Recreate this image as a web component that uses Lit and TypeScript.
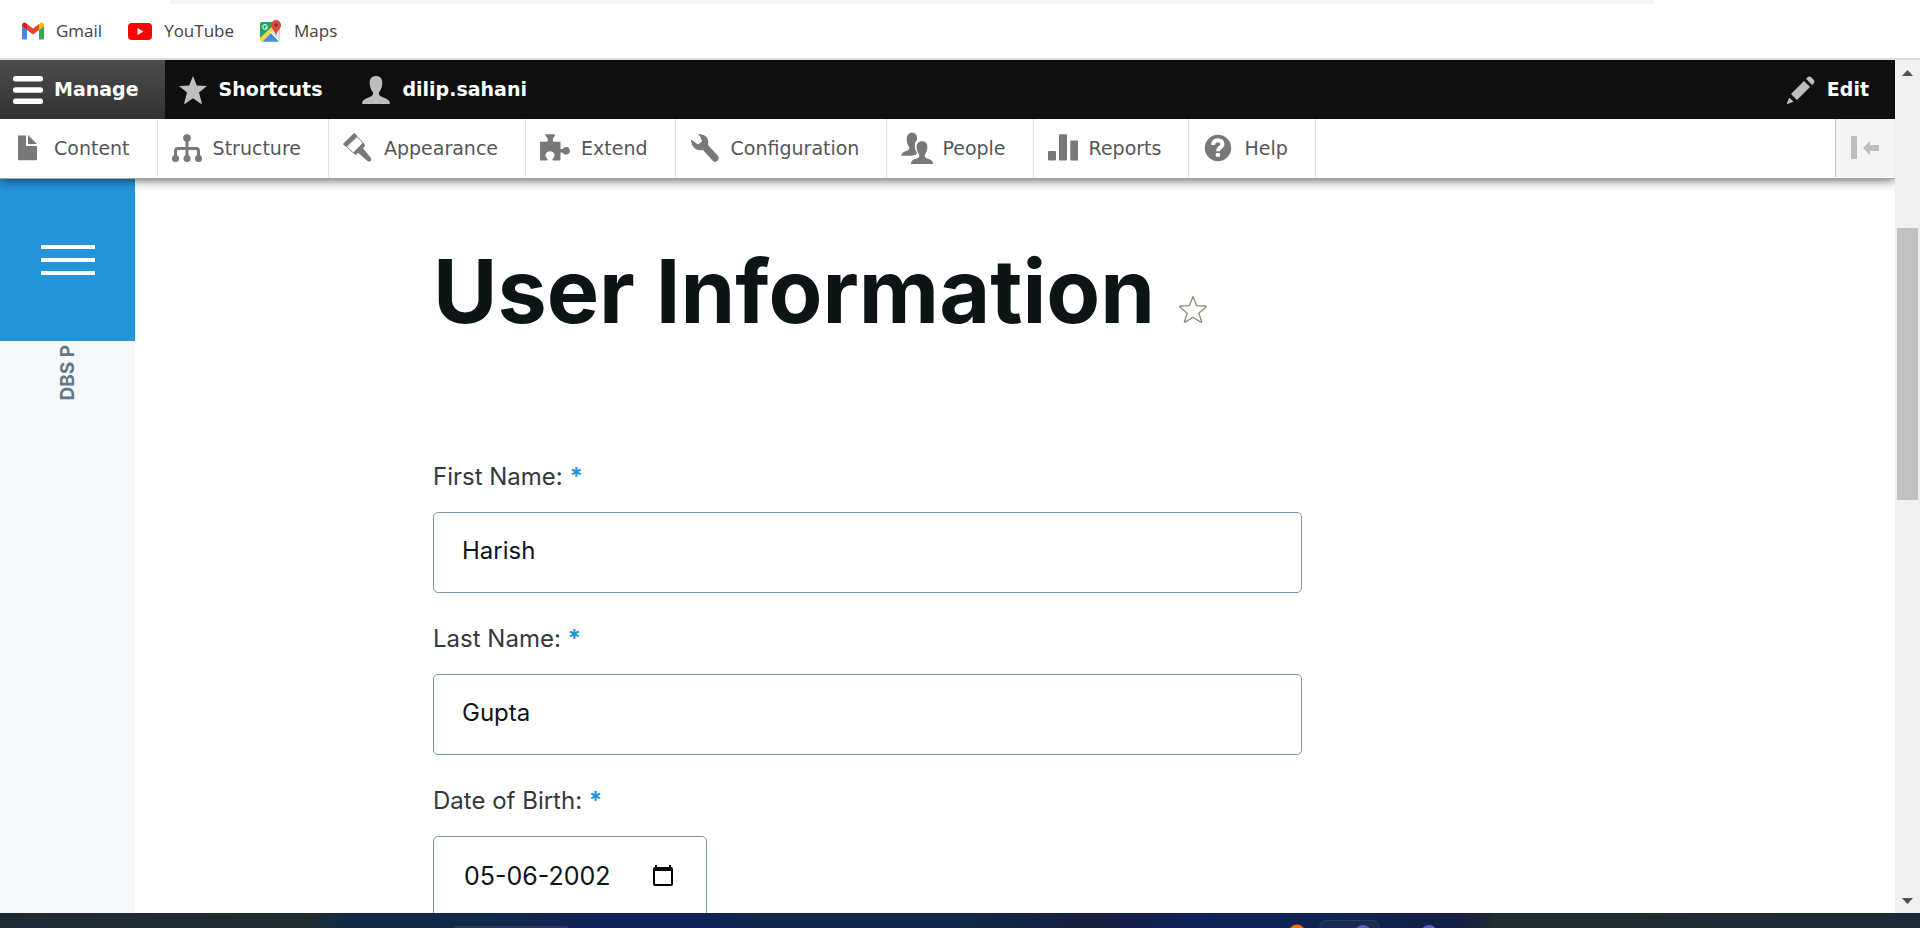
import { LitElement, html, css, svg } from "lit";
import { customElement } from "lit/decorators.js";

const icons: Record<string, unknown> = {
  gmail: svg`<svg width="22" height="18" viewBox="0 0 22 18"><path fill="#4285f4" d="M0 4v12q0 1.500 1.500 1.500H5V8z"/><path fill="#34a853" d="M17 8v9.500h3.500q1.500 0 1.500-1.500V4z"/><path fill="#ea4335" d="M5 8V2l6 4.600L17 2v6l-6 4.500z"/><path fill="#c5221f" d="M0 4V3Q.5 0 3 .5L5 2v6L0 4.200z"/><path fill="#fbbc04" d="M22 4V3Q21.500 0 19 .5L17 2v6l5-3.800z"/></svg>`,
  youtube: svg`<svg width="24" height="17" viewBox="0 0 24 17"><rect width="24" height="17" rx="4" fill="red"/><path fill="#fff" d="M9.500 5v7l6-3.500z"/></svg>`,
  maps: svg`<svg width="22" height="22" viewBox="0 0 22 22"><rect y="2" width="20" height="19.500" rx="2" fill="#1fa463"/><path fill="#dfe3e6" d="M10 12 19.500 3 20 20l-1 1.500z"/><path fill="#f9d649" d="m0 18 16-15 2 3L3 21.500H0z"/><path fill="#4a89f3" d="m3 21.500 7-7 8 7z"/><path stroke="#fff" stroke-width="1" d="m10 11.500 9 9.500"/><path fill="none" stroke="#d8f0e2" stroke-width="1.200" d="M7 5.700A2.300 2.300 0 1 0 7.300 7.200H5.300"/><path fill="#dd4b3e" d="M16 0a5 5 0 0 1 5 5c0 4-4 5-5 11-1-6-5-7-5-11a5 5 0 0 1 5-5z"/><circle cx="16" cy="5" r="1.800" fill="#822f2b"/></svg>`,
  manage: svg`<svg width="30" height="30" viewBox="0 0 30 30" fill="#fff"><rect y="1" width="30" height="5.500" rx="2.500"/><rect y="12.300" width="30" height="5.500" rx="2.500"/><rect y="23.500" width="30" height="5.500" rx="2.500"/></svg>`,
  star: svg`<svg width="30" height="30" viewBox="0 0 30 30"><path fill="#bebebe" d="M15 1l3.800 9.600 10.200.5-8 6.400 2.800 10.600q.2 1.200-1 .7L15 23.300l-7.800 5.500q-1.200.5-1-.7L9 17.500l-8-6.400 10.200-.5z"/></svg>`,
  user: svg`<svg width="30" height="30" viewBox="0 0 30 30"><path fill="#bebebe" d="M15 1c4.500 0 6.800 3 6.300 8-.3 3.500-1.600 6-3 8-.7 1.200-.6 3 .9 4 2.500 1.700 9 2.500 9.800 7.200 0 .6-.4.800-.8.800H1.800c-.4 0-.8-.2-.8-.8.800-4.700 7.300-5.500 9.800-7.200 1.500-1 1.600-2.800.9-4-1.400-2-2.700-4.500-3-8C8.200 4 10.500 1 15 1z"/></svg>`,
  pencil: svg`<svg width="30" height="30" viewBox="0 0 30 30" fill="#bebebe"><path d="M20 3.800 22.200 1.800q1.500-1 3 .5l2.600 2.600q1.300 1.500.3 3L26 10z"/><path d="M18 6 24 12 11 25 5 19z"/><path d="M3.200 22.500 7.500 26.800 1.500 29Q.8 29 1 28z"/></svg>`,
  content: svg`<svg width="30" height="30" viewBox="0 0 30 30" fill="#787878"><path d="M5 2.500h8v10.500h11v13q0 1.200-1.200 1.200H6.200Q5 27.200 5 26z"/><path d="M15 2 24 11h-9z"/></svg>`,
  structure: svg`<svg width="30" height="30" viewBox="0 0 30 30"><g fill="#787878"><circle cx="15" cy="5" r="3.800"/><circle cx="3.500" cy="25.500" r="3.500"/><circle cx="15" cy="25.500" r="3.500"/><circle cx="26.500" cy="25.500" r="3.500"/></g><path fill="none" stroke="#787878" stroke-width="3" d="M15 5v19M3.500 25v-7q0-2.500 2.500-2.500h18q2.500 0 2.500 2.500v7"/></svg>`,
  appearance: svg`<svg width="30" height="30" viewBox="0 0 30 30"><path fill="#787878" d="M.4 10.500 10.500.4q.8-.6 1.600.2l2.400 2.600L3.200 14 .5 11.700q-.6-.6-.1-1.200z"/><path fill="#fff" stroke="#787878" stroke-width="1" d="M3.600 13.600 14.100 3.500l6.200 6.800L10.500 20z"/><path fill="#787878" d="M10.200 19.800 20 9.800l1.600 1.700q.8 1-.1 2L20 15.300l7.900 9.800q.9 1.500-.3 2.800-1.300 1.200-2.800.3L15 19.800l-1.300 1.500q-1 .8-2 0z"/></svg>`,
  extend: svg`<svg width="30" height="30" viewBox="0 0 30 30"><path fill="#787878" d="M5.500 1.200h9q.8.800 0 2.200-1.700 1.600-1.700 3 0 2.300 1 2.300h6.700v6.800q0 1.300 2 .4 1.700-1.900 4-1.900c4.600 0 4.600 7.600 0 7.600q-2.300 0-4-1.900-2-.9-2 .4v6.500q0 .8-.8.800h-6.500q-1.500-.4-.3-2c1.500-1.400 2-2.800 1.400-4.500-1.400-3.700-7.200-3.700-8.600 0-.6 1.700-.1 3.100 1.400 4.500 1.200 1.600.4 2-.9 2H0V8.700h6.700q1.300 0 1.200-2.300 0-1.400-1.900-3-1-1.400-.5-2.200z"/></svg>`,
  configuration: svg`<svg width="30" height="30" viewBox="0 0 30 30"><path fill="#787878" d="M1 8q-.3-1.500.8-1L8 11.500l4-3L10 3Q7 2 9 1.300 13.500.5 16.500 4q2.500 3.500 1.500 8L28 23q1.600 2 0 4.500-2.500 2.500-4.800.8L13 17q-5 1-8.500-1.700Q1.500 12.500 1 8z"/></svg>`,
  people: svg`<svg width="32" height="32" viewBox="0 0 30 30"><path fill="#787878" d="M10.300.8c3.300 0 5.100 2.200 4.700 5.700q0 1-.6 2-2 1.700-1.500 5.200.2 3 1.900 5.300.3 1.300-1 2.300l-4 1H.6Q0 22 .5 21c1-2.400 4-2.800 6-3.800 1.300-.8 1.500-2.200.7-3.600C5.800 11 5.300 9 5.400 6.500 5.500 3 7.300.8 10.300.8z"/><path fill="#787878" d="M19.700 8.700c3.500 0 5.300 2.300 5 6-.2 2.500-1 4.500-2.100 6.200-.7 1.400-.5 2.400.7 3.200 2.200 1.300 6 1.500 6.700 4.900 0 .8-.3.900-.7.900H10.100c-.4 0-.7-.1-.7-.9.700-3.400 4.500-3.600 6.700-4.900 1.200-.8 1.400-1.800.7-3.200-1.100-1.700-1.900-3.700-2.100-6.200-.3-3.700 1.500-6 5-6z"/></svg>`,
  reports: svg`<svg width="30" height="30" viewBox="0 0 30 30" fill="#787878"><rect y="18" width="8" height="9.500" rx="1"/><rect x="11" y="1.300" width="8" height="26.200" rx="1"/><rect x="22.300" y="7.500" width="8" height="20" rx="1"/></svg>`,
  help: svg`<svg width="30" height="30" viewBox="0 0 30 30"><circle cx="15" cy="15" r="13.200" fill="#787878"/><path fill="none" stroke="#fff" stroke-width="4" d="M10 12q.5-4.700 4.900-4.700 4.500.2 4.500 3.900 0 2-2.500 3.500-2 1.300-2 3.500"/><rect x="12.800" y="20" width="4.300" height="3.800" rx="1" fill="#fff"/></svg>`,
};

@customElement("tool-bar")
class ToolBar extends LitElement {
  static styles = css`
    :host { display: block; font: 19px/59px "DejaVu Sans", Verdana, sans-serif; position: relative; z-index: 2; box-shadow: 0 1px 10px rgba(0, 0, 0, 0.65); clip-path: inset(0 0 -12px 0); }
    a { text-decoration: none; color: inherit; display: flex; align-items: center; }
    .icon { display: flex; width: 30px; margin-right: 11px; }
    .icon svg { display: block; flex: none; }
    .bar { display: flex; background: #0f0f0f; color: #fff; font-weight: 700; height: 59px; }
    .bar a { padding: 0 26px 0 13px; }
    .bar a.active { background: linear-gradient(#4c4c4c, #323232); }
    .bar a.edit { margin-left: auto; }
    .tray { display: flex; background: #fff; color: #565656; height: 58px; line-height: 58px; padding-bottom: 1px; border-bottom: 1px solid #a6a6a6; }
    .tray a { padding: 0 27px 0 14px; border-right: 1px solid #ddd; }
    .tray a:first-child { padding-left: 13px; }
    .toggle { margin-left: auto; width: 60px; border: 0; border-left: 1px solid #c2c2c2; background: #f5f5f5; padding: 0 0 0 15px; display: flex; align-items: center; }
  `;
  render() {
    const tray = ["Content", "Structure", "Appearance", "Extend", "Configuration", "People", "Reports", "Help"];
    return html`
      <nav class="bar" aria-label="Administration">
        <a class="active" href="#manage"><span class="icon">${icons.manage}</span>Manage</a>
        <a href="#shortcuts"><span class="icon">${icons.star}</span>Shortcuts</a>
        <a href="#user"><span class="icon">${icons.user}</span>dilip.sahani</a>
        <a class="edit" href="#edit"><span class="icon">${icons.pencil}</span>Edit</a>
      </nav>
      <nav class="tray" aria-label="Manage">
        ${tray.map((t) => html`<a href="#${t.toLowerCase()}"><span class="icon">${icons[t.toLowerCase()]}</span>${t}</a>`)}
        <button class="toggle" aria-label="Vertical orientation"><svg width="30" height="24" viewBox="0 0 30 24" fill="#bebebe"><rect width="6" height="23" rx="1"/><path d="M12 12l7-7v4h8.500q.5 0 .5.500v5q0 .5-.5.500H19v4z"/></svg></button>
      </nav>`;
  }
}

@customElement("user-form")
class UserForm extends LitElement {
  static styles = css`
    :host { display: block; font: 24px/30px Inter, sans-serif; color: #34383c; }
    h1 { margin: 0; font: 700 88px/106px Inter, sans-serif; color: #0d1416; display: flex; align-items: baseline; gap: 24px; white-space: nowrap; }
    .fav { border: 0; background: none; padding: 0; line-height: 0; }
    form { margin-top: 118px; max-width: 869px; }
    .field { display: flex; flex-direction: column; margin-bottom: 31px; }
    label { margin-bottom: 20px; }
    .req { color: #2494db; font-weight: 700; }
    input { font: inherit; color: #0d1416; border: 0; background: none; outline: 0; padding: 0; min-width: 0; flex: 1; }
    .box { display: flex; align-items: center; box-sizing: border-box; height: 81px; border: 1px solid #7c95aa; border-radius: 5px; padding: 0 28px 4px; }
    .date { width: 274px; padding: 0 33px 2px 30px; font-size: 25px; }
    .date button { border: 0; background: none; padding: 0; display: flex; }
  `;
  field(id: string, label: string, value: string) {
    return html`<div class="field"><label for=${id}>${label}: <span class="req">*</span></label>
      <div class="box"><input id=${id} type="text" .value=${value} required /></div></div>`;
  }
  render() {
    return html`
      <h1>User Information<button class="fav" aria-label="Add to shortcuts"><svg width="28" height="28" viewBox="0 0 28 28"><path fill="none" stroke="#8f8c78" stroke-width="1.300" stroke-linejoin="round" d="M14 1.500l3.600 9.200 9.200.3q.8.500 0 1.200l-7 6.100 2.800 8.200q0 .9-.9.600L14 22.200l-7.700 4.900q-.9.300-.9-.6l2.800-8.200-7-6.100q-.8-.7 0-1.200l9.200-.3z"/></svg></button></h1>
      <form>
        ${this.field("first", "First Name", "Harish")}
        ${this.field("last", "Last Name", "Gupta")}
        <div class="field"><label for="dob">Date of Birth: <span class="req">*</span></label>
          <div class="box date"><input id="dob" type="text" inputmode="numeric" .value=${"05-06-2002"} required />
            <button type="button" aria-label="Open calendar"><svg width="20" height="21" viewBox="0 0 20 21"><path fill-rule="evenodd" d="M2 0h2v2h12V0h2v2q2 0 2 2v15q0 2-2 2H2q-2 0-2-2V4q0-2 2-2zM2 6v13h16V6z"/></svg></button></div></div>
      </form>`;
  }
}

@customElement("app-root")
class AppRoot extends LitElement {
  static styles = css`
    :host { display: flex; flex-direction: column; height: 100vh; overflow: hidden; background: #fff; }
    .chrome { flex: none; height: 58px; border-bottom: 2px solid #dcdcdc; }
    .omnibox { height: 4px; margin: 0 266px 0 170px; background: #f1f3f4; border-radius: 0 0 14px 14px; }
    .bookmarks { display: flex; gap: 26px; padding-left: 22px; font: 17px/22px "Open Sans", sans-serif; color: #3f4246; margin-top: 16px; }
    .bookmarks a { display: flex; align-items: center; gap: 12px; color: inherit; text-decoration: none; }
    .view { flex: 1; min-height: 0; display: flex; }
    .page { flex: 1; min-width: 0; display: flex; flex-direction: column; overflow: hidden; }
    .body { flex: 1; min-height: 0; display: flex; }
    .side { flex: none; width: 135px; background: #f6f8fa; display: flex; flex-direction: column; align-items: center; }
    .menu { width: 100%; height: 162px; border: 0; padding: 0; background: #2494db; flex: none; display: flex; flex-direction: column; align-items: center; justify-content: center; gap: 9px; }
    .menu span { width: 54px; height: 4px; background: #fff; }
    .brand { writing-mode: vertical-rl; transform: rotate(180deg); font: 700 19px/22px Inter, sans-serif; color: #627788; padding-bottom: 4px; }
    main { flex: 1; min-width: 0; padding: 59px 0 0 298px; }
    .scroll { flex: none; width: 25px; background: #f0f0f0; display: flex; flex-direction: column; align-items: center; padding: 10px 0 9px; box-sizing: border-box; }
    .scroll svg { flex: none; fill: #505050; }
    .track { flex: 1; width: 21px; display: grid; grid-template-rows: 152fr 272fr 398fr; }
    .thumb { grid-row: 2; background: #c1c1c1; }
    .taskbar { flex: none; height: 15px; position: relative; background: linear-gradient(90deg, #1c2a35, #202b30 16%, #122a48 18%, #12284a 25%, #10205a 32%, #10205a 36%, #12284a 40%, #12284a 50%, #171f40 57%, #10205a 62%, #0e2450 70%, #151f45 76%, #202b30 78%, #202b30 84%, #1c2a35 92%); }
    .taskbar svg { display: block; width: 100%; height: 15px; }
  `;
  render() {
    return html`
      <header class="chrome">
        <div class="omnibox"></div>
        <nav class="bookmarks" aria-label="Bookmarks">
          <a href="#gmail">${icons.gmail}Gmail</a><a href="#youtube">${icons.youtube}YouTube</a><a href="#maps">${icons.maps}Maps</a>
        </nav>
      </header>
      <div class="view">
        <div class="page">
          <tool-bar></tool-bar>
          <div class="body">
            <aside class="side">
              <button class="menu" aria-label="Menu"><span></span><span></span><span></span></button>
              <div class="brand">DBS P</div>
            </aside>
            <main><user-form></user-form></main>
          </div>
        </div>
        <div class="scroll" aria-hidden="true">
          <svg width="11" height="6"><path d="M0 6 5.500 0 11 6z"/></svg>
          <div class="track"><div class="thumb"></div></div>
          <svg width="11" height="6"><path d="M0 0 5.500 6 11 0z"/></svg>
        </div>
      </div>
      <footer class="taskbar"><svg viewBox="0 0 1920 15" preserveAspectRatio="none"><rect x="452" y="13" width="118" height="12" rx="5" fill="#2b3a5c"/><rect x="1320" y="7.500" width="59" height="20" rx="6" fill="#1b2a50" stroke="#2c3d66"/><circle cx="1297" cy="20" r="8.500" fill="#e8710a"/><circle cx="1363" cy="20" r="8" fill="#5b62b8"/><circle cx="1429" cy="20" r="8" fill="#5b62b8"/></svg></footer>`;
  }
}
